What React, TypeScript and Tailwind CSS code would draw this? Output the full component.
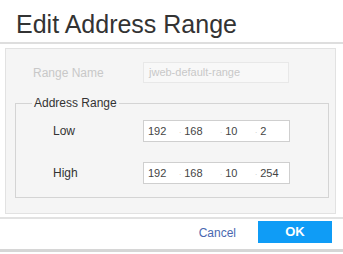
export default function App() {
    const rows = [
        { label: "Low", ip: ["192", "168", "10", "2"] },
        { label: "High", ip: ["192", "168", "10", "254"] },
    ];
    const segW = ["w-[31px]", "w-[41px]", "w-[35px]", "w-[34px]"];

    return (
        <div className="relative h-[254px] w-[343px] overflow-hidden bg-white font-['Liberation_Sans',Arial,sans-serif]">
            <div className="h-[44px] border-b-2 border-[#dedede] pl-4 pt-[10px]">
                <h1 className="text-[25px] leading-[28px] text-[#333]">Edit Address Range</h1>
            </div>

            <div className="mx-[5px] mt-[4px] h-[166px] w-[331px] border border-[#e2e2e2] bg-[#f5f5f5]">
                <div className="flex items-center pt-[13px]">
                    <span className="w-[137px] pl-[27px] text-[12px] text-[#c8c8c8]">Range Name</span>
                    <div className="flex h-[21px] w-[146px] items-center border border-[#e8e8e8] bg-[#f8f8f8] pl-[5px] text-[11px] text-[#c8c8c8]">
                        jweb-default-range
                    </div>
                </div>

                <fieldset className="ml-[9px] mt-[13px] w-[314px] border border-[#d4d4d4] pb-[13px] pt-[10px]">
                    <legend className="ml-[16px] px-[2px] text-[12px] leading-[14px] text-[#333]">Address Range</legend>
                    <div className="flex flex-col gap-[20px]">
                        {rows.map((row) => (
                            <div key={row.label} className="flex items-center">
                                <span className="w-[127px] pl-[37px] text-[12px] font-medium text-[#333]">{row.label}</span>
                                <div className="flex h-[22px] w-[147px] items-center border border-[#cfcfcf] bg-white pl-[4px] text-[11px] text-[#444]">
                                    {row.ip.map((part, i) => (
                                        <span key={i} className={`${segW[i]} flex items-center`}>
                                            {i > 0 && <span className="mr-[3px] text-[8px] text-[#c4c4c4]">.</span>}
                                            {part}
                                        </span>
                                    ))}
                                </div>
                            </div>
                        ))}
                    </div>
                </fieldset>
            </div>

            <div className="mt-[3px] flex h-[32px] items-start border-t-2 border-[#e2e2e2] pt-[2px]">
                <div className="flex-1" />
                <button className="mr-[22px] mt-[1px] h-[22px] text-[12px] text-[#4a68b0]">Cancel</button>
                <button className="mr-[11px] h-[22px] w-[74px] bg-[#0f9cf6] text-[13px] font-bold text-white">OK</button>
            </div>
            <div className="h-[3px] bg-[#d6d6d6]" />
        </div>
    );
}
